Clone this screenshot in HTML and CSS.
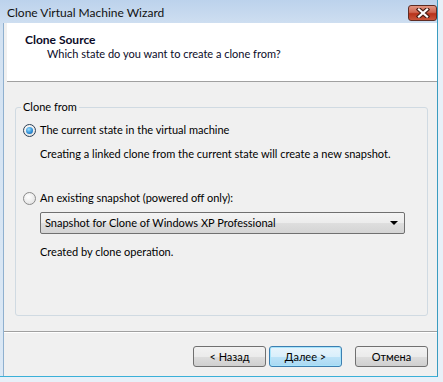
FILE: index.html
```html
<!DOCTYPE html>
<html lang="en">
<head>
    <meta charset="UTF-8">
    <title>Clone Virtual Machine Wizard</title>
    <link rel="stylesheet" href="styles.css">
</head>
<body>
    <div class="window">
        <div class="titlebar">
            <span class="title">Clone Virtual Machine Wizard</span>
            <div class="close-btn">
                <svg width="14" height="10" viewBox="0 0 14 10">
                    <path d="M3 1.5 L11 8.5 M11 1.5 L3 8.5" stroke="#4a2018" stroke-width="4.5" stroke-linecap="square"/>
                    <path d="M3 1.5 L11 8.5 M11 1.5 L3 8.5" stroke="#fff" stroke-width="2.2" stroke-linecap="square"/>
                </svg>
            </div>
        </div>

        <div class="client">
            <div class="header">
                <div class="header-title">Clone Source</div>
                <div class="header-sub">Which state do you want to create a clone from?</div>
            </div>

            <div class="content">
                <div class="group">
                    <div class="group-label">Clone from</div>

                    <div class="option">
                        <span class="radio checked"></span>
                        <span>The current state in the virtual machine</span>
                    </div>
                    <div class="note">Creating a linked clone from the current state will create a new snapshot.</div>

                    <div class="option option-second">
                        <span class="radio"></span>
                        <span>An existing snapshot (powered off only):</span>
                    </div>
                    <div class="select">
                        <span>Snapshot for Clone of Windows XP Professional</span>
                        <span class="arrow"></span>
                    </div>
                    <div class="note">Created by clone operation.</div>
                </div>
            </div>

            <div class="footer">
                <div class="btn">&lt; Назад</div>
                <div class="btn btn-default">Далее &gt;</div>
                <div class="btn btn-cancel">Отмена</div>
            </div>
        </div>
    </div>
</body>
</html>
```

FILE: styles.css
```css
body {
    margin: 0;
    width: 443px;
    height: 382px;
    background: #e8f0f8;
    font-family: Lato, "Liberation Sans", sans-serif;
    font-size: 11px;
    line-height: 14px;
    color: #000;
    overflow: hidden;
}

.window {
    width: 438px;
    height: 377px;
    box-sizing: border-box;
    background: linear-gradient(#bcd2ec, #d3e2f2 30px, #dbe8f5);
    border-right: 1px solid #3a9cc0;
    border-bottom: 1px solid #3ab0d8;
    display: flex;
    flex-direction: column;
}

/* title bar */
.titlebar {
    height: 23px;
    flex: none;
    display: flex;
    align-items: center;
    justify-content: space-between;
    padding: 0 0 0 7px;
}
.title {
    font-size: 12px;
    color: #111;
    margin-top: 2px;
}
.close-btn {
    width: 27px;
    height: 14px;
    margin: 2px 0 0 0;
    border: 1px solid #5e2c24;
    border-radius: 3px;
    background: linear-gradient(#e29684, #d06650 45%, #b8321a 55%, #c9553a);
    display: flex;
    align-items: center;
    justify-content: center;
}

/* client area */
.client {
    flex: 1;
    margin-left: 3px;
    background: #f0f0f0;
    display: flex;
    flex-direction: column;
    border-left: 1px solid #8fb0cf;
}

.header {
    height: 59px;
    flex: none;
    background: #fff;
    border-bottom: 1px solid #a0a0a0;
    margin-left: 3px;
    padding: 10px 0 0 18px;
    box-sizing: border-box;
}
.header-title {
    font-weight: bold;
    font-size: 12px;
    color: #0b0b28;
}
.header-sub {
    margin: 0 0 0 22px;
    color: #0b0b28;
}

.content {
    height: 250px;
    flex: none;
    border-bottom: 1px solid #a0a0a0;
    padding: 25px 9px 15px 11px;
    box-sizing: border-box;
}

.group {
    height: 100%;
    border: 1px solid #d0dae2;
    border-radius: 3px;
    box-sizing: border-box;
    padding: 0 0 0 7px;
    position: relative;
}
.group-label {
    position: absolute;
    top: -8px;
    left: 5px;
    padding: 0 2px;
    background: #f0f0f0;
}

.option {
    display: flex;
    align-items: center;
    gap: 4px;
    margin-top: 15px;
}
.option-second {
    margin-top: 30px;
}

.radio {
    width: 11px;
    height: 11px;
    border: 1px solid #8a8a8a;
    border-radius: 50%;
    background: radial-gradient(circle at 40% 35%, #fff, #dcdcdc);
    box-sizing: content-box;
    position: relative;
}
.radio.checked {
    border-color: #2c3f55;
}
.radio.checked::after {
    content: "";
    position: absolute;
    left: 2px;
    top: 2px;
    width: 7px;
    height: 7px;
    border-radius: 50%;
    background: radial-gradient(circle at 40% 35%, #9ae0ff, #2a8ad4 60%, #0b4d8c);
}

.note {
    margin: 10px 0 0 17px;
}

.select {
    margin: 7px 0 0 17px;
    width: 365px;
    height: 22px;
    box-sizing: border-box;
    border: 1px solid #707070;
    border-radius: 2px;
    background: linear-gradient(#f4f4f4, #ececec 50%, #dedede 51%, #d4d4d4);
    display: flex;
    align-items: center;
    justify-content: space-between;
    padding: 0 6px 0 4px;
}
.select + .note {
    margin-top: 11px;
}
.arrow {
    width: 0;
    height: 0;
    border-left: 4px solid transparent;
    border-right: 4px solid transparent;
    border-top: 4px solid #000;
}

/* buttons */
.footer {
    flex: 1;
    border-top: 1px solid #fff;
    display: flex;
    align-items: flex-start;
    justify-content: flex-end;
    padding: 13px 9px 0 0;
    box-sizing: border-box;
    gap: 3px;
}
.btn {
    width: 73px;
    height: 21px;
    box-sizing: border-box;
    border: 1px solid #707070;
    border-radius: 3px;
    background: linear-gradient(#f2f2f2, #ebebeb 50%, #dddddd 51%, #cfcfcf);
    display: flex;
    align-items: center;
    justify-content: center;
}
.btn-default {
    border-color: #3c7fb1;
    background: linear-gradient(#e8f4fc, #d9effb 50%, #bde3f8 51%, #a9d8f2);
    box-shadow: inset 0 0 0 1px #a8e4fb;
}
.btn-cancel {
    margin-left: 10px;
}
```
